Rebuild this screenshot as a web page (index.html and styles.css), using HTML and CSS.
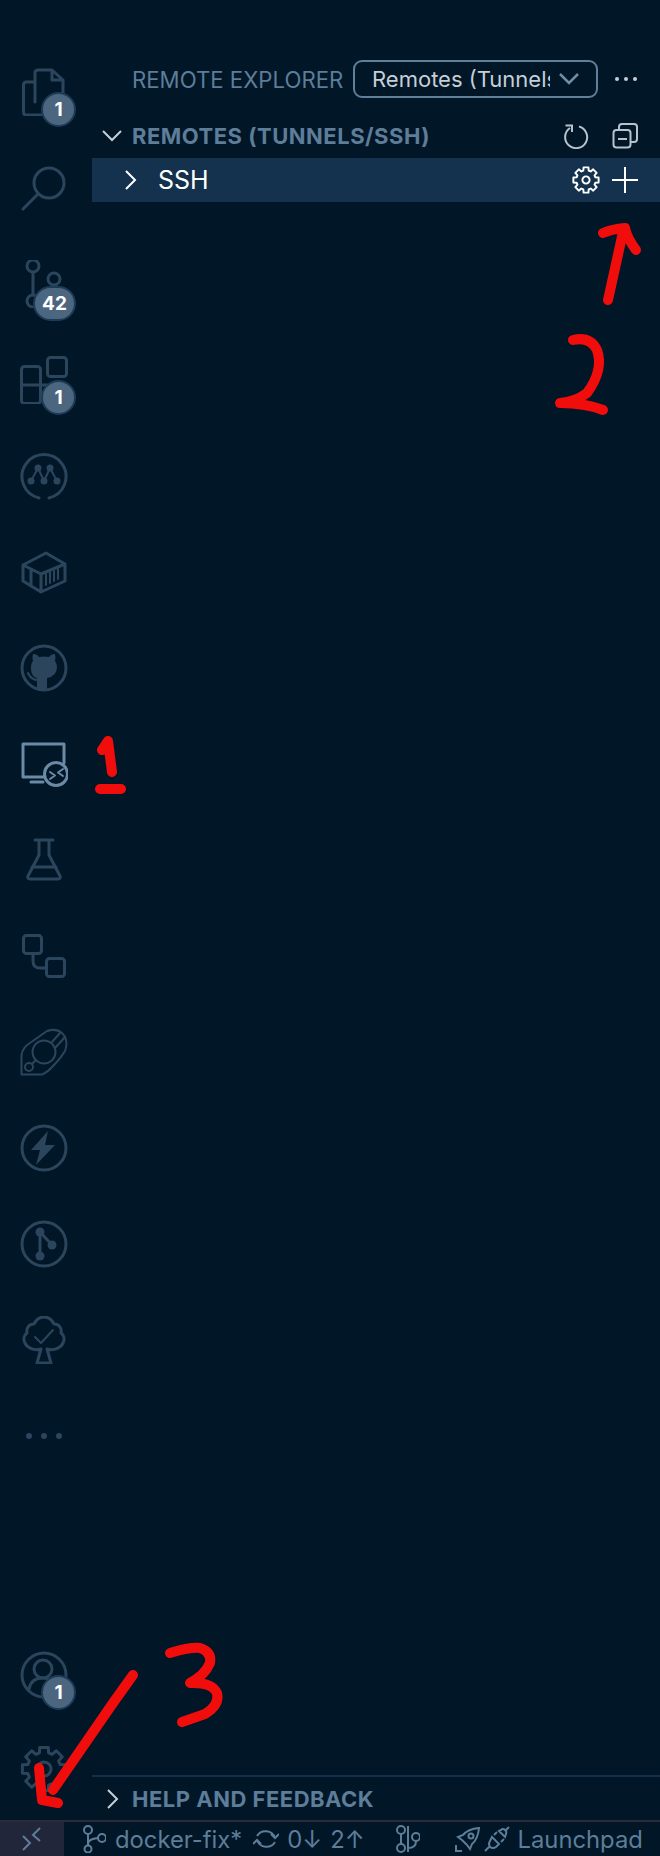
FILE: index.html
```html
<!DOCTYPE html>
<html lang="en">
<head>
  <meta charset="UTF-8">
  <title>Remote Explorer</title>
  <link rel="stylesheet" href="styles.css">
</head>
<body>
  <div class="app">
    <div class="main">
      <nav class="activity">
        <div class="activity-top">
          <div class="item">
            <svg class="icon" viewBox="0 0 48 48"><path d="M15 34V5q0-3 3-3h14l11 10v22M32 2v10h11M15 14H6.500q-3 0-3 3v27q0 3 3 3H26"/></svg>
            <span class="badge">1</span>
          </div>
          <div class="item">
            <svg class="icon" viewBox="0 0 48 48"><circle cx="29" cy="19" r="15"/><path d="M18 30 3 45"/></svg>
          </div>
          <div class="item">
            <svg class="icon" viewBox="0 0 48 48"><circle cx="13" cy="6" r="6"/><circle cx="34" cy="19" r="6"/><circle cx="13" cy="41" r="6"/><path d="M13 12v23M34 25q0 9-15 13"/></svg>
            <span class="badge wide">42</span>
          </div>
          <div class="item">
            <svg class="icon" viewBox="0 0 48 48"><rect x="27.500" y="1.500" width="19" height="19" rx="3"/><rect x="1.500" y="10.500" width="19" height="37" rx="3"/><path d="M1.500 29H32"/></svg>
            <span class="badge">1</span>
          </div>
          <div class="item">
            <svg class="icon" viewBox="0 0 48 48"><path d="M19 46A22 22 0 1 1 29 46"/><path class="thin" d="M11 29 18 16 24 29 30 16 37 29"/><g class="solid"><circle cx="18" cy="16" r="3.500"/><circle cx="30" cy="16" r="3.500"/><circle cx="11" cy="29" r="3.500"/><circle cx="24" cy="29" r="3.500"/><circle cx="37" cy="29" r="3.500"/></g></svg>
          </div>
          <div class="item">
            <svg class="icon" viewBox="0 0 48 48"><path d="M26 5 45 16v17L21 44 3 33V17ZM3 17l18 9 24-10M21 26v18M11 22v16"/><path class="thin" d="M26 26v11M30 24v11M34 23v10M38 21v10"/></svg>
          </div>
          <div class="item">
            <svg class="icon" viewBox="0 0 48 48"><circle cx="24" cy="24" r="22"/><path class="solid" d="M13 10Q17 10 19 13 24 12 29 13 31 10 35 10 36 13 35 17 37 20 37 23 37 32 27 34V46Q22 47 17 46V34C12 33 11 28 11 23 11 20 12 18 13 17 12 13 13 10 13 10Z"/><path class="thin" d="M8 29q3 7 10 7"/></svg>
          </div>
          <div class="item active">
            <svg class="icon" viewBox="0 0 48 48"><path d="M24 37H3V4H44V23M11 42h12"/><circle cx="36" cy="34" r="11.500"/><path class="thin" d="M30 32l5 3.500-5 3.500M43 29l-5 3.500 5 3.500"/></svg>
          </div>
          <div class="item">
            <svg class="icon" viewBox="0 0 48 48"><path d="M15 4h18M19 4v15L8 40q-1 3 2 3h28q3 0 2-3L29 19V4M12 31h24"/></svg>
          </div>
          <div class="item">
            <svg class="icon" viewBox="0 0 48 48"><rect x="3.500" y="3.500" width="18" height="18" rx="3"/><rect x="26.500" y="26.500" width="18" height="18" rx="3"/><path d="M13 22v7q0 7 7 7h6"/></svg>
          </div>
          <div class="item">
            <svg class="icon" viewBox="0 0 48 48"><path class="thin" d="M1.500 46.500V27Q3 19 10 15L27 3Q36 0 42 5 49 12 45 23 41 30 34 37 28 44 22 46.500Z"/><circle class="thin" cx="24" cy="24" r="11.500"/><path class="thin" d="M40 5 32 14M45 9 35 20M16 32l-4 4"/><circle class="thin" cx="9" cy="39" r="4"/></svg>
          </div>
          <div class="item">
            <svg class="icon" viewBox="0 0 48 48"><circle cx="24" cy="24" r="22"/><path class="solid" d="M28 7 11 26h9l-4 15 19-20h-10Z"/></svg>
          </div>
          <div class="item">
            <svg class="icon" viewBox="0 0 48 48"><circle cx="24" cy="24" r="22"/><path d="M20 12v24M20 12l12 13"/><g class="solid"><circle cx="20" cy="12" r="4.500"/><circle cx="32" cy="25" r="4.500"/><circle cx="20" cy="36" r="4.500"/></g></svg>
          </div>
          <div class="item">
            <svg class="icon" viewBox="0 0 48 48"><path d="M21 33C14 35 7 32 5 27 3 23 4 19 7 17 6 12 9 8 14 8 16 4 20 1 24 1S32 4 34 8C39 8 42 12 41 17 44 19 45 23 43 27 41 32 34 35 27 33L31 47H17Z"/><path class="thin" d="M15 21l6 6 12-13"/></svg>
          </div>
          <div class="item">
            <svg class="icon" viewBox="0 0 48 48"><g class="solid"><circle cx="9" cy="24" r="3"/><circle cx="24" cy="24" r="3"/><circle cx="39" cy="24" r="3"/></g></svg>
          </div>
        </div>
        <div class="activity-bottom">
          <div class="item">
            <svg class="icon" viewBox="0 0 48 48"><circle cx="24" cy="24" r="22"/><circle cx="23" cy="18" r="9"/><path d="M9 38q2-11 14-11 6 0 10 4"/></svg>
            <span class="badge">1</span>
          </div>
          <div class="item gear">
            <svg class="icon gear-big" viewBox="-1.090 -1.090 2.180 2.180"><path d="M-.209-.731-.191-.982H.191L.209-.731.368-.665.559-.829.829-.559.665-.368.731-.209.982-.191V.191L.731.209.665.368.829.559.559.829.368.665.209.731.191.982H-.191L-.209.731-.368.665-.559.829-.829.559-.665.368-.731.209-.982.191V-.191L-.731-.209-.665-.368-.829-.559-.559-.829-.368-.665Z"/><circle r=".32"/></svg>
          </div>
        </div>
      </nav>
      <section class="panel">
        <header class="panel-title">
          <span class="panel-label">REMOTE EXPLORER</span>
          <div class="select">
            <span class="select-text">Remotes (Tunnels/SSH)</span>
            <svg class="select-chev" viewBox="0 0 20 12"><path d="M1 1l9 9 9-9"/></svg>
          </div>
          <span class="more"><i></i><i></i><i></i></span>
        </header>
        <div class="section-head">
          <svg class="chev" viewBox="0 0 20 20"><path d="M1 5l9 9 9-9"/></svg>
          <span class="section-name">REMOTES (TUNNELS/SSH)</span>
          <div class="actions">
            <svg class="action" viewBox="0 0 26 26"><path d="M6 5A11 11 0 1 0 15 3.500M1.500 2.500H8V9"/></svg>
            <svg class="action" viewBox="0 0 26 26"><rect x="1.500" y="7" width="17" height="17.500" rx="3"/><path d="M7 7V4q0-3 3-3h12q3 0 3 3v12q0 3-3 3h-3M6 16h9"/></svg>
          </div>
        </div>
        <div class="row">
          <svg class="row-chev" viewBox="0 0 12 20"><path d="M1 1l9 9-9 9"/></svg>
          <span class="row-name">SSH</span>
          <div class="actions tight">
            <svg class="action gear-small" viewBox="-1.090 -1.090 2.180 2.180"><path d="M-.209-.731-.191-.982H.191L.209-.731.368-.665.559-.829.829-.559.665-.368.731-.209.982-.191V.191L.731.209.665.368.829.559.559.829.368.665.209.731.191.982H-.191L-.209.731-.368.665-.559.829-.829.559-.665.368-.731.209-.982.191V-.191L-.731-.209-.665-.368-.829-.559-.559-.829-.368-.665Z"/><circle r=".28"/></svg>
            <svg class="action white" viewBox="0 0 26 26"><path d="M13 0v26M0 13h26"/></svg>
          </div>
        </div>
        <div class="panel-fill"></div>
        <div class="help">
          <svg class="help-chev" viewBox="0 0 12 20"><path d="M1 1l9 9-9 9"/></svg>
          <span class="section-name">HELP AND FEEDBACK</span>
        </div>
      </section>
    </div>
    <footer class="status">
      <div class="remote-btn">
        <svg class="status-icon" viewBox="0 0 24 28"><path d="M20 3 13 10l7 6M3 11l7 7-7 7"/></svg>
      </div>
      <div class="status-items">
        <svg class="status-icon branch" viewBox="0 0 24 28"><circle cx="6" cy="5" r="4"/><circle cx="6" cy="24" r="3.500"/><circle cx="20" cy="13" r="4"/><path d="M6 9v11M6 19q0-5 10-6"/></svg>
        <span class="status-text">docker-fix*</span>
        <svg class="status-icon sync" viewBox="0 0 26 24"><path d="M4 9A10 10 0 0 1 22 11M18 7l4 4 4-4M22 15A10 10 0 0 1 4 13M0 17l4-4 4 4"/></svg>
        <span class="status-text">0↓</span>
        <span class="status-text">2↑</span>
        <svg class="status-icon pr" viewBox="0 0 24 28"><circle cx="5" cy="5" r="4"/><circle cx="5" cy="23" r="4"/><circle cx="20" cy="12" r="4"/><path d="M5 9v10M12 1v26M20 16q0 7-8 7"/></svg>
        <svg class="status-icon rocket" viewBox="0 0 26 26"><path d="M24 2Q13 3 8 9l-5 2 4 3 5 5 3 4 2-5q6-5 7-16ZM1 19v6h6"/><circle cx="16" cy="10" r="2.500"/></svg>
        <svg class="status-icon plug" viewBox="0 0 26 26"><path d="M8 11l7 7-3 3q-3 2-6 0-2-3 0-6ZM15 5l6 6 1-3q1-3-1-4-2-2-4 0ZM10 9l3-3M17 16l3-3M1 25l4-4M21 5l4-4"/></svg>
        <span class="status-text launch">Launchpad</span>
      </div>
    </footer>
    <svg class="scribble" viewBox="0 0 660 1856">
      <path d="M608 300 623 232M603 233Q612 229 625 228 627 238 636 250"/>
      <path d="M573 340Q590 336 597 350 604 370 587 393 575 402 560 403 585 403 603 410"/>
      <path d="M102 750 108 741 112 772M100 789H121"/>
      <path d="M170 1653Q190 1647 200 1648 212 1652 210 1663 205 1675 190 1683 212 1682 217 1693 220 1705 205 1714L182 1722"/>
      <path d="M133 1675 113 1703 53 1790M39 1768 42 1800 58 1803"/>
    </svg>
  </div>
</body>
</html>
```
FILE: styles.css
```css
* {
  box-sizing: border-box;
}

body {
  margin: 0;
  background: #011627;
  font-family: "Inter", "Liberation Sans", sans-serif;
  overflow: hidden;
}

.app {
  position: relative;
  display: flex;
  flex-direction: column;
  height: 100vh;
}

.main {
  display: flex;
  flex: 1;
  min-height: 0;
}

svg path, svg circle, svg rect {
  fill: none;
}

/* activity bar */
.activity {
  width: 92px;
  padding-top: 44px;
  display: flex;
  flex-direction: column;
  justify-content: space-between;
}

.item {
  position: relative;
  height: 96px;
  display: flex;
  align-items: center;
  justify-content: center;
  padding-right: 4px;
  color: #2b465c;
}

.item.active {
  color: #6a8aa5;
}

.item.gear {
  height: 92px;
  margin-bottom: 5px;
}

.icon {
  width: 48px;
  height: 48px;
  stroke: currentColor;
  stroke-width: 3;
  stroke-linecap: round;
  stroke-linejoin: round;
}

.icon .thin, svg .thin {
  stroke-width: 2;
}

.icon .solid, .icon .solid circle {
  fill: currentColor;
  stroke: none;
}

.icon.gear-big {
  stroke-width: .136;
}

.badge {
  position: absolute;
  left: 41px;
  top: 48px;
  min-width: 35px;
  height: 35px;
  border: 2px solid #1b3c58;
  border-radius: 18px;
  background: #4c667f;
  color: #fff;
  font-size: 19px;
  font-weight: 700;
  line-height: 31px;
  text-align: center;
}

.badge.wide {
  left: 33px;
  width: 43px;
  top: 50px;
}

/* side panel */
.panel {
  flex: 1;
  min-width: 0;
  padding-top: 44px;
  display: flex;
  flex-direction: column;
}

.panel-title {
  height: 70px;
  display: flex;
  align-items: center;
  padding-left: 40px;
}

.panel-label {
  width: 221px;
  font-size: 22.200px;
  color: #5d7d98;
  white-space: nowrap;
}

.select {
  width: 245px;
  height: 38px;
  border: 2px solid #5f7f9b;
  border-radius: 9px;
  padding: 0 17px;
  display: flex;
  align-items: center;
  justify-content: space-between;
}

.select-text {
  width: 178px;
  overflow: hidden;
  white-space: nowrap;
  font-size: 22px;
  color: #c6cfd7;
}

.select-chev {
  width: 20px;
  height: 12px;
  stroke: #6f8ea8;
  stroke-width: 2.500;
}

.more {
  margin-left: 17px;
  display: flex;
  gap: 5px;
}

.more i {
  width: 4px;
  height: 4px;
  border-radius: 2px;
  background: #c6cfd7;
}

.section-head {
  height: 44px;
  display: flex;
  align-items: center;
  padding-left: 10px;
}

.chev {
  width: 20px;
  height: 20px;
  margin-right: 10px;
  stroke: #c6cfd7;
  stroke-width: 2;
}

.section-name {
  font-size: 22px;
  font-weight: 700;
  letter-spacing: .5px;
  color: #5d7d98;
  white-space: nowrap;
}

.actions {
  margin-left: auto;
  display: flex;
  align-items: center;
  gap: 22px;
  padding-right: 22px;
}

.actions.tight {
  gap: 12px;
}

.action {
  width: 26px;
  height: 26px;
  stroke: #b8c2cb;
  stroke-width: 2;
}

.action.white {
  stroke: #fff;
}

.action.gear-small {
  width: 28px;
  height: 28px;
  stroke: #fff;
  stroke-width: .15;
  stroke-linejoin: round;
}

.row {
  height: 44px;
  display: flex;
  align-items: center;
  padding-left: 33px;
  background: #14324d;
}

.row-chev {
  width: 12px;
  height: 20px;
  stroke: #fff;
  stroke-width: 2;
  margin-right: 21px;
}

.row-name {
  font-size: 25px;
  color: #fff;
}

.panel-fill {
  flex: 1;
}

.help {
  height: 45px;
  border-top: 2px solid #13304a;
  display: flex;
  align-items: center;
  padding-left: 15px;
}

.help-chev {
  width: 12px;
  height: 20px;
  stroke: #c6cfd7;
  stroke-width: 2;
  margin-right: 13px;
}

/* status bar */
.status {
  height: 36px;
  border-top: 2px solid #2a2a3d;
  display: flex;
  align-items: center;
  color: #5d7d98;
}

.remote-btn {
  width: 64px;
  height: 100%;
  background: #21263a;
  display: flex;
  align-items: center;
  justify-content: center;
}

.remote-btn .status-icon {
  height: 28px;
}

.status-items {
  flex: 1;
  display: flex;
  align-items: center;
  padding-left: 18px;
}

.status-icon {
  flex: none;
  width: 24px;
  height: 24px;
  stroke: #5d7d98;
  stroke-width: 2;
}

.status-icon.branch, .status-icon.pr {
  height: 28px;
}

.status-icon.branch {
  margin-right: 9px;
}

.status-text {
  font-size: 23.800px;
  white-space: nowrap;
}

.status-icon.sync {
  width: 26px;
  margin: 0 8px 0 11px;
}

.status-text + .status-text {
  margin-left: 8px;
}

.status-icon.pr {
  margin-left: 31px;
}

.status-icon.rocket {
  width: 26px;
  height: 26px;
  margin-left: 35px;
}

.status-icon.plug {
  width: 26px;
  height: 26px;
  margin: 0 8px 0 3px;
}

/* hand drawn notes on top of the screenshot */
.scribble {
  position: absolute;
  left: 0;
  top: 0;
  width: 660px;
  height: 1856px;
  pointer-events: none;
}

.scribble path {
  stroke: #f10d0c;
  stroke-width: 10;
  stroke-linecap: round;
  stroke-linejoin: round;
}
```
